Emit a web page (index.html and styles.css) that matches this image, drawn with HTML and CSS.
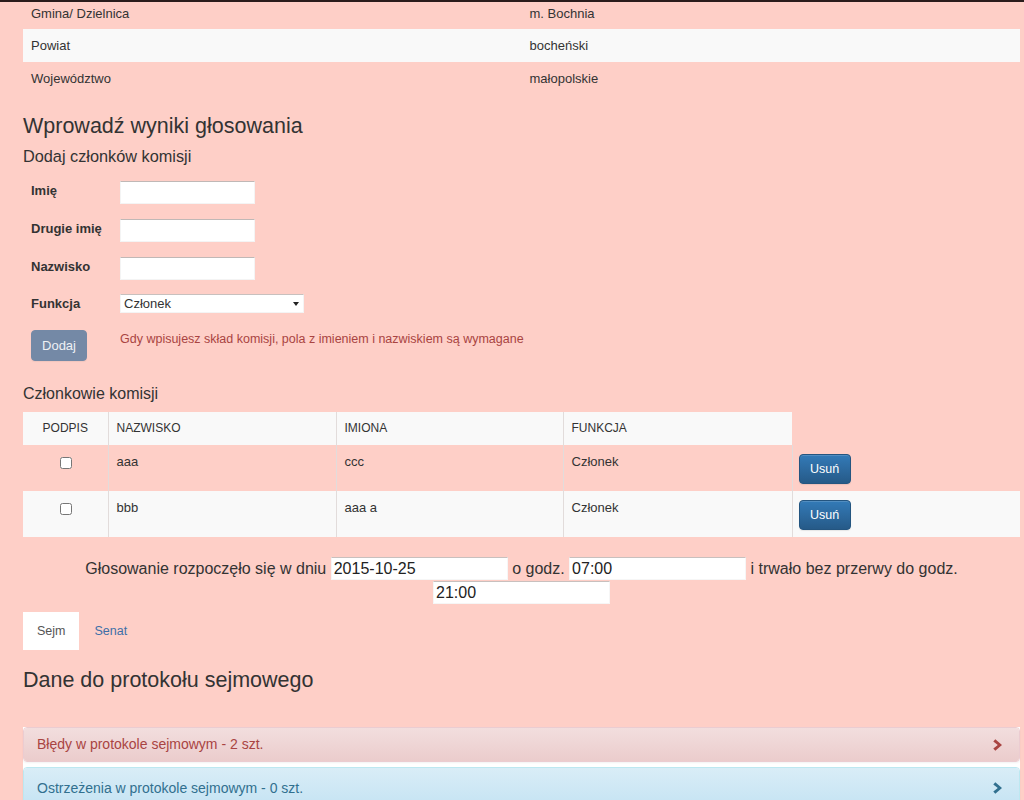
FILE: index.html
```html
<!DOCTYPE html>
<html lang="pl">
<head>
<meta charset="utf-8">
<title>Wprowadź wyniki głosowania</title>
<link rel="stylesheet" href="styles.css">
</head>
<body>
<div class="topbar"></div>
<main class="container">
  <table class="info">
    <tbody>
      <tr class="first"><td>Gmina/ Dzielnica</td><td>m. Bochnia</td></tr>
      <tr class="striped"><td>Powiat</td><td>bocheński</td></tr>
      <tr><td>Województwo</td><td>małopolskie</td></tr>
    </tbody>
  </table>

  <h2 class="title">Wprowadź wyniki głosowania</h2>
  <h3 class="subtitle">Dodaj członków komisji</h3>

  <form class="member-form">
    <div class="form-row"><label for="imie">Imię</label><input id="imie" type="text" class="field"></div>
    <div class="form-row"><label for="drugie">Drugie imię</label><input id="drugie" type="text" class="field"></div>
    <div class="form-row"><label for="nazwisko">Nazwisko</label><input id="nazwisko" type="text" class="field"></div>
    <div class="form-row select-row">
      <label for="funkcja">Funkcja</label>
      <span class="select-wrap">
        <select id="funkcja" class="select"><option>Członek</option></select>
        <span class="caret"></span>
      </span>
    </div>
    <div class="form-actions">
      <button type="button" class="btn btn-disabled">Dodaj</button>
      <p class="help">Gdy wpisujesz skład komisji, pola z imieniem i nazwiskiem są wymagane</p>
    </div>
  </form>

  <h3 class="section-title">Członkowie komisji</h3>
  <table class="members">
    <colgroup>
      <col class="c-sign"><col class="c-name"><col class="c-first"><col class="c-func"><col class="c-act">
    </colgroup>
    <thead>
      <tr><th class="center">PODPIS</th><th>NAZWISKO</th><th>IMIONA</th><th>FUNKCJA</th><th class="empty"></th></tr>
    </thead>
    <tbody>
      <tr><td class="center"><input type="checkbox" class="check"></td><td>aaa</td><td>ccc</td><td>Członek</td><td><button type="button" class="btn btn-primary">Usuń</button></td></tr>
      <tr class="striped"><td class="center"><input type="checkbox" class="check"></td><td>bbb</td><td>aaa a</td><td>Członek</td><td><button type="button" class="btn btn-primary">Usuń</button></td></tr>
    </tbody>
  </table>

  <p class="vote-time">Głosowanie rozpoczęło się w dniu <input type="text" class="time-field" value="2015-10-25"> o godz. <input type="text" class="time-field" value="07:00"> i trwało bez przerwy do godz. <input type="text" class="time-field" value="21:00"></p>

  <ul class="tabs">
    <li class="active"><a href="#sejm">Sejm</a></li>
    <li><a href="#senat">Senat</a></li>
  </ul>

  <h2 class="title protocol-title">Dane do protokołu sejmowego</h2>

  <div class="panel-group">
    <div class="panel panel-danger">
      <div class="panel-heading">
        <span>Błędy w protokole sejmowym - 2 szt.</span>
        <svg class="chevron" width="10" height="12" viewBox="0 0 10 12" aria-hidden="true"><polygon points="2.3,0.3 9,6 2.3,11.7 0.3,9.5 4.8,6 0.3,2.5"/></svg>
      </div>
    </div>
    <div class="panel panel-info">
      <div class="panel-heading">
        <span>Ostrzeżenia w protokole sejmowym - 0 szt.</span>
        <svg class="chevron" width="10" height="12" viewBox="0 0 10 12" aria-hidden="true"><polygon points="2.3,0.3 9,6 2.3,11.7 0.3,9.5 4.8,6 0.3,2.5"/></svg>
      </div>
    </div>
  </div>
</main>
</body>
</html>
```

FILE: styles.css
```css
* { box-sizing: border-box; }

html, body {
  margin: 0;
  padding: 0;
}

body {
  background: #fecfc7;
  color: #333;
  font-family: "Liberation Sans", Arial, sans-serif;
  font-size: 13px;
  line-height: 17px;
  overflow: hidden;
}

.topbar {
  height: 2px;
  background: #2a1c1c;
}

.container {
  padding: 0 4px 0 23px;
}

/* info table */
.info {
  width: 100%;
  border-collapse: collapse;
  table-layout: fixed;
}
.info td {
  padding: 8px;
  line-height: 17px;
  vertical-align: top;
}
.info tr.first td {
  padding-top: 3px;
  padding-bottom: 7px;
}
.striped td { background: #f9f9f9; }

/* headings */
.title {
  margin: 19px 0 0;
  font-size: 21.5px;
  line-height: 24px;
  font-weight: normal;
}
.subtitle {
  margin: 8px 0 0;
  font-size: 16.3px;
  line-height: 20px;
  font-weight: normal;
}

/* form */
.member-form {
  margin-top: 15px;
  padding-left: 8px;
  display: flex;
  flex-direction: column;
  gap: 15px;
}
.form-row {
  display: grid;
  grid-template-columns: 89px auto;
  align-items: center;
  height: 23px;
}
.form-row label {
  font-weight: bold;
  line-height: 17px;
  margin-top: -4px;
}
.select-row label { margin-top: 0; }
.field {
  width: 135px;
  height: 23px;
  margin: 0;
  background: #fff;
  border: 1px solid #f4f4f4;
  border-top-color: #c0b8b6;
  font: 13px "Liberation Sans", Arial, sans-serif;
  padding: 0 3px;
}
.select-row {
  height: 19px;
  margin-top: -1px;
}
.select-wrap {
  position: relative;
  display: inline-block;
  width: 184px;
  height: 19px;
}
.select {
  appearance: none;
  -webkit-appearance: none;
  width: 184px;
  height: 19px;
  margin: 0;
  border: 1px solid #f4f4f4;
  border-top-color: #c8c0be;
  border-radius: 0;
  background: #fff;
  color: #333;
  font: 13px "Liberation Sans", Arial, sans-serif;
  padding: 0 3px;
  line-height: 17px;
}
.caret {
  position: absolute;
  right: 5px;
  top: 8px;
  width: 0;
  height: 0;
  border-left: 3.5px solid transparent;
  border-right: 3.5px solid transparent;
  border-top: 4px solid #222;
}

.form-actions {
  display: grid;
  grid-template-columns: 89px auto;
  align-items: start;
  margin-top: 2px;
}
.help {
  margin: 0;
  color: #a94442;
  font-size: 12.5px;
  line-height: 18px;
}

.btn {
  display: inline-block;
  font: 13px "Liberation Sans", Arial, sans-serif;
  line-height: 18px;
  padding: 5px 12px;
  border-radius: 4px;
  border: 1px solid transparent;
  color: #fff;
  cursor: pointer;
}
.btn-disabled {
  width: 56px;
  height: 31px;
  padding: 5px 0;
  text-align: center;
  background: #7489a6;
  border-color: #7489a6;
  color: #eef0f4;
  box-shadow: 0 1px 1px rgba(0,0,0,.05);
}
.btn-primary {
  background: linear-gradient(to bottom, #337ab7 0, #265a88 100%);
  border-color: #245580;
  box-shadow: inset 0 1px 0 rgba(255,255,255,.15), 0 1px 1px rgba(0,0,0,.08);
  width: 52px;
  height: 30px;
  padding: 5px 0;
  text-align: center;
  font-size: 12.5px;
  margin: 1px 0 0 -2px;
}

/* members */
.section-title {
  margin: 24px 0 0;
  font-size: 16px;
  line-height: 18px;
  font-weight: normal;
}
.members {
  width: 100%;
  margin-top: 9px;
  border-collapse: collapse;
  table-layout: fixed;
}
.c-sign { width: 85px; }
.c-name { width: 228px; }
.c-first { width: 227px; }
.c-func { width: 229px; }
.c-act { width: 228px; }

.members th {
  background: #f9f9f9;
  font-weight: normal;
  font-size: 12px;
  text-align: left;
  padding: 8px;
  line-height: 17px;
}
.members th.empty { background: transparent; }
.members td {
  padding: 8px 8px 7px;
  line-height: 17px;
  vertical-align: top;
}
.members th + th,
.members td + td {
  border-left: 1px solid #e2dcdb;
}
.members th.empty { border-left-color: transparent; }
.members .center { text-align: center; }
.check {
  margin: 4px 0 0 2px;
  width: 12px;
  height: 12px;
}

/* vote time */
.vote-time {
  margin: 20px 0 0;
  text-align: center;
  font-size: 16px;
  line-height: 24px;
}
.time-field {
  width: 177px;
  height: 23px;
  margin: 0;
  vertical-align: top;
  background: #fff;
  border: 1px solid #f6f6f6;
  border-top-color: #c8c0be;
  font: 16px "Liberation Sans", Arial, sans-serif;
  color: #222;
  padding: 0 2px;
}

/* tabs */
.tabs {
  list-style: none;
  margin: 7px 0 0;
  padding: 0;
  display: flex;
  gap: 1px;
}
.tabs a {
  display: block;
  padding: 10px 14px;
  line-height: 18px;
  font-size: 12.5px;
  color: #3d6fa8;
  text-decoration: none;
}
.tabs .active a {
  background: #fff;
  color: #555;
}

.protocol-title {
  margin-top: 18px;
}

/* panels */
.panel-group {
  margin-top: 35px;
  background: #fff;
  display: flex;
  flex-direction: column;
  gap: 5px;
}
.panel {
  border: 1px solid transparent;
  border-radius: 4px;
  box-shadow: 0 1px 2px rgba(0,0,0,.05);
}
.panel-heading {
  display: flex;
  justify-content: space-between;
  align-items: center;
  padding: 9px 17px 9px 13px;
  font-size: 14px;
  line-height: 15px;
  border-radius: 3px;
}
.panel-danger { border-color: #ebccd1; }
.panel-danger .panel-heading {
  background: linear-gradient(to bottom, #f2dede 0, #ebcccc 100%);
  color: #a94442;
}
.panel-danger .chevron { fill: #a94442; }
.panel-info { border-color: #bce8f1; }
.panel-info .panel-heading {
  background: linear-gradient(to bottom, #d9edf7 0, #c4e3f3 100%);
  color: #31708f;
  height: 40px;
}
.panel-info .chevron { fill: #31708f; }
.chevron { margin-right: -1px; }
```
